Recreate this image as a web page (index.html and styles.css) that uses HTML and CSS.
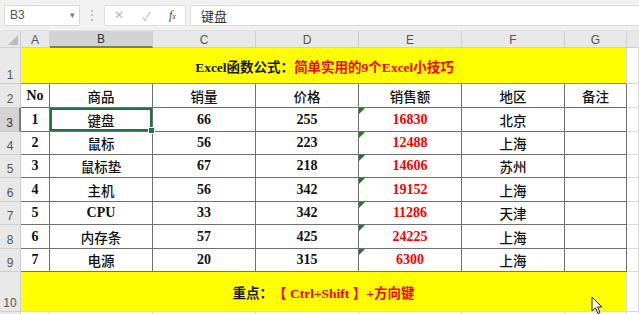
FILE: index.html
```html
<!DOCTYPE html>
<html lang="zh-CN">
<head>
  <meta charset="UTF-8">
  <title>Excel函数公式</title>
  <link rel="stylesheet" href="styles.css">
</head>
<body>
  <div class="topbar">
    <div class="namebox">
      <span>B3</span>
      <span class="caret">&#9662;</span>
    </div>
    <div class="dots">&#8942;</div>
    <div class="fxbox">
      <span class="icon">&#10005;</span>
      <span class="icon">&#10003;</span>
      <span class="fx"><i>f</i><small>x</small></span>
    </div>
    <div class="formula">键盘</div>
  </div>

  <div class="sheet">
    <!-- column headers -->
    <div class="corner"><span class="tri"></span></div>
    <div class="colhead">A</div>
    <div class="colhead sel">B</div>
    <div class="colhead">C</div>
    <div class="colhead">D</div>
    <div class="colhead">E</div>
    <div class="colhead">F</div>
    <div class="colhead">G</div>
    <div class="colhead last"></div>

    <!-- row 1 -->
    <div class="rowhead">1</div>
    <div class="merged title">Excel函数公式：<span class="red">简单实用的9个Excel小技巧</span></div>
    <div class="cell"></div>

    <!-- row 2 -->
    <div class="rowhead">2</div>
    <div class="cell t b">No</div>
    <div class="cell t cjk">商品</div>
    <div class="cell t cjk">销量</div>
    <div class="cell t cjk">价格</div>
    <div class="cell t cjk">销售额</div>
    <div class="cell t cjk">地区</div>
    <div class="cell t cjk">备注</div>
    <div class="cell"></div>

    <!-- row 3 -->
    <div class="rowhead sel">3</div>
    <div class="cell t b">1</div>
    <div class="cell t cjk active">键盘</div>
    <div class="cell t b">66</div>
    <div class="cell t b">255</div>
    <div class="cell t b red txt">16830</div>
    <div class="cell t cjk">北京</div>
    <div class="cell t"></div>
    <div class="cell"></div>

    <!-- row 4 -->
    <div class="rowhead">4</div>
    <div class="cell t b">2</div>
    <div class="cell t cjk">鼠标</div>
    <div class="cell t b">56</div>
    <div class="cell t b">223</div>
    <div class="cell t b red txt">12488</div>
    <div class="cell t cjk">上海</div>
    <div class="cell t"></div>
    <div class="cell"></div>

    <!-- row 5 -->
    <div class="rowhead">5</div>
    <div class="cell t b">3</div>
    <div class="cell t cjk">鼠标垫</div>
    <div class="cell t b">67</div>
    <div class="cell t b">218</div>
    <div class="cell t b red txt">14606</div>
    <div class="cell t cjk">苏州</div>
    <div class="cell t"></div>
    <div class="cell"></div>

    <!-- row 6 -->
    <div class="rowhead">6</div>
    <div class="cell t b">4</div>
    <div class="cell t cjk">主机</div>
    <div class="cell t b">56</div>
    <div class="cell t b">342</div>
    <div class="cell t b red txt">19152</div>
    <div class="cell t cjk">上海</div>
    <div class="cell t"></div>
    <div class="cell"></div>

    <!-- row 7 -->
    <div class="rowhead">7</div>
    <div class="cell t b">5</div>
    <div class="cell t b">CPU</div>
    <div class="cell t b">33</div>
    <div class="cell t b">342</div>
    <div class="cell t b red txt">11286</div>
    <div class="cell t cjk">天津</div>
    <div class="cell t"></div>
    <div class="cell"></div>

    <!-- row 8 -->
    <div class="rowhead">8</div>
    <div class="cell t b">6</div>
    <div class="cell t cjk">内存条</div>
    <div class="cell t b">57</div>
    <div class="cell t b">425</div>
    <div class="cell t b red txt">24225</div>
    <div class="cell t cjk">上海</div>
    <div class="cell t"></div>
    <div class="cell"></div>

    <!-- row 9 -->
    <div class="rowhead">9</div>
    <div class="cell t b">7</div>
    <div class="cell t cjk">电源</div>
    <div class="cell t b">20</div>
    <div class="cell t b">315</div>
    <div class="cell t b red txt">6300</div>
    <div class="cell t cjk">上海</div>
    <div class="cell t"></div>
    <div class="cell"></div>

    <!-- row 10 -->
    <div class="rowhead">10</div>
    <div class="merged note">重点：<span class="red">【 Ctrl+Shift 】+方向键</span>
      <svg class="pointer" width="12" height="19" viewBox="0 0 12 19">
        <path d="M1 1 L1 15 L4.5 11.8 L7 17.5 L9 16.6 L6.6 11 L11 11 Z" fill="#fff" stroke="#222" stroke-width="1" stroke-linejoin="round"/>
      </svg>
    </div>
    <div class="cell"></div>

    <!-- row 11 -->
    <div class="rowhead"></div>
    <div class="cell"></div>
    <div class="cell"></div>
    <div class="cell"></div>
    <div class="cell"></div>
    <div class="cell"></div>
    <div class="cell"></div>
    <div class="cell"></div>
    <div class="cell"></div>
  </div>
</body>
</html>
```

FILE: styles.css
```css
body {
  margin: 0;
  background-color: #ffffff;
  font-family: "Liberation Serif", "Noto Sans CJK SC", serif;
  overflow: hidden;
}

.topbar {
  display: flex;
  align-items: center;
  height: 31px;
  background-color: #f1f1f1;
  border-bottom: 1px solid #e2e2e2;
  box-sizing: border-box;
  font-family: "Liberation Sans", "Noto Sans CJK SC", sans-serif;
}

.namebox {
  display: flex;
  justify-content: space-between;
  align-items: center;
  margin-left: 4px;
  width: 76px;
  height: 21px;
  box-sizing: border-box;
  padding: 0 4px 0 5px;
  background-color: #ffffff;
  border: 1px solid #dadada;
  font-size: 12px;
  color: #555555;
}

.caret {
  font-size: 9px;
  color: #777777;
}

.dots {
  width: 24px;
  text-align: center;
  color: #a6a6a6;
  font-size: 12px;
}

.fxbox {
  display: flex;
  align-items: center;
  justify-content: space-around;
  width: 82px;
  height: 21px;
  box-sizing: border-box;
  background-color: #ffffff;
  border: 1px solid #e0e0e0;
}

.icon {
  color: #bdbdbd;
  font-size: 12px;
}

.fx {
  font-family: "Liberation Serif", serif;
  font-size: 12px;
  color: #444444;
}

.fx small {
  font-size: 8px;
  font-style: italic;
}

.formula {
  flex: 1;
  margin-left: 4px;
  height: 21px;
  box-sizing: border-box;
  padding-left: 10px;
  line-height: 19px;
  background-color: #ffffff;
  border: 1px solid #dadada;
  border-right: none;
  font-size: 13px;
  color: #333333;
  font-family: "Noto Sans CJK SC", sans-serif;
}

.sheet {
  display: grid;
  grid-template-columns: 21px 29px 103px 103px 103px 103px 103px 62px 1fr;
  grid-template-rows: 17px 36px 24px 24px 23px 23px 24px 23px 24px 23px 40px 10px;
}

.corner {
  position: relative;
  background-color: #e8e8e8;
  border-right: 1px solid #cfcfcf;
  border-bottom: 1px solid #cfcfcf;
}

.tri {
  position: absolute;
  right: 2px;
  bottom: 2px;
  width: 0;
  height: 0;
  border-left: 10px solid transparent;
  border-bottom: 10px solid #bcbcbc;
}

.colhead {
  display: flex;
  justify-content: center;
  align-items: flex-end;
  background-color: #e8e8e8;
  border-right: 1px solid #cfcfcf;
  border-bottom: 1px solid #cfcfcf;
  font-family: "Liberation Sans", sans-serif;
  font-size: 12px;
  color: #555555;
  line-height: 14px;
}

.colhead.sel {
  background-color: #d3d3d3;
  border-bottom: 2px solid #7a7a7a;
  color: #333333;
}

.colhead.last {
  border-right: none;
}

.rowhead {
  display: flex;
  justify-content: center;
  align-items: flex-end;
  background-color: #e8e8e8;
  border-right: 1px solid #cfcfcf;
  border-bottom: 1px solid #cfcfcf;
  font-family: "Liberation Sans", sans-serif;
  font-size: 12px;
  color: #555555;
  line-height: 15px;
}

.rowhead.sel {
  background-color: #d3d3d3;
  border-right: 2px solid #7a7a7a;
  color: #333333;
}

.cell {
  display: flex;
  justify-content: center;
  align-items: center;
  border-right: 1px solid #d9d9d9;
  border-bottom: 1px solid #d9d9d9;
  font-size: 14px;
  color: #111111;
}

.cell.t {
  border-right-color: #707070;
  border-bottom-color: #707070;
}

.b {
  font-weight: bold;
}

.cjk {
  font-family: "Noto Sans CJK SC", sans-serif;
  font-size: 13.5px;
  font-weight: 500;
}

.red {
  color: #ff0000;
}

.txt {
  position: relative;
}

.txt::before {
  content: "";
  position: absolute;
  left: 0;
  top: 0;
  border-top: 6px solid #1f7a1f;
  border-right: 6px solid transparent;
}

.active {
  position: relative;
  box-shadow: inset 0 0 0 2px #217346;
}

.active::after {
  content: "";
  position: absolute;
  right: -3px;
  bottom: -3px;
  width: 5px;
  height: 5px;
  background-color: #217346;
  border: 1px solid #ffffff;
}

.merged {
  grid-column: span 7;
  display: flex;
  justify-content: center;
  align-items: center;
  background-color: #ffff00;
  border-right: 1px solid #d9d9d9;
  font-weight: bold;
  font-size: 13.5px;
  color: #1a1a1a;
}

.title {
  border-bottom: 1px solid #8a8a8a;
  padding-left: 2px;
}

.note {
  position: relative;
  border-bottom: 1px solid #d9d9d9;
  box-sizing: border-box;
}

.pointer {
  position: absolute;
  left: 570px;
  top: 24px;
}
```
